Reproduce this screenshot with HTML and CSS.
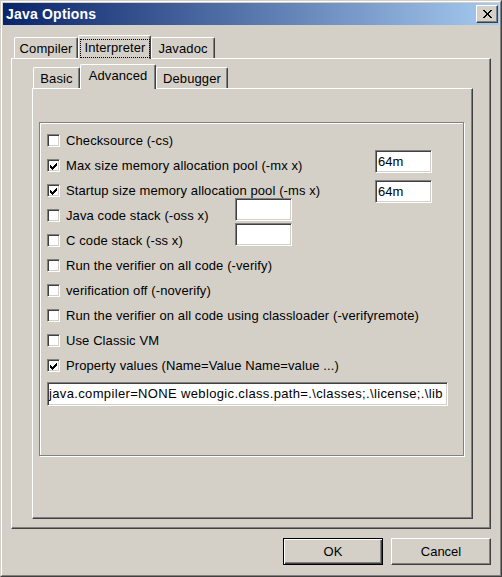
FILE: index.html
```html
<!DOCTYPE html>
<html>
<head>
<meta charset="utf-8">
<title>Java Options</title>
<link rel="stylesheet" href="styles.css">
</head>
<body>
<div class="win">
  <div class="win-in">
    <div class="titlebar">
      <span class="title">Java Options</span>
      <div class="close">
        <svg width="9" height="8" viewBox="0 0 9 8" shape-rendering="crispEdges"><path d="M0 0h2v1h-2zM7 0h2v1h-2zM1 1h2v1h-2zM6 1h2v1h-2zM2 2h2v1h-2zM5 2h2v1h-2zM3 3h3v2h-3zM2 5h2v1h-2zM5 5h2v1h-2zM1 6h2v1h-2zM6 6h2v1h-2zM0 7h2v1h-2zM7 7h2v1h-2z" fill="#000"/></svg>
      </div>
    </div>
    <div class="body">
      <div class="tabs outer-tabs">
        <div class="tab w-compiler">Compiler</div>
        <div class="tab sel w-interp"><span class="focus">Interpreter</span></div>
        <div class="tab w-javadoc">Javadoc</div>
      </div>
      <div class="panel outer-panel">
        <div class="tabs inner-tabs">
          <div class="tab w-basic">Basic</div>
          <div class="tab sel w-adv"><span class="seltext">Advanced</span></div>
          <div class="tab w-debug">Debugger</div>
        </div>
        <div class="panel inner-panel">
          <div class="group">
            <div class="row"><span class="cb"></span><span>Checksource (-cs)</span></div>
            <div class="row">
              <span class="lbl wide"><span class="cb"><svg width="11" height="11" viewBox="1 1 11 11" shape-rendering="crispEdges"><path d="M3 6h1v1h1v1h1v-1h1v-1h1v-1h1v-1h1v3h-1v1h-1v1h-1v1h-1v1h-1v-1h-1v-1h-1z" fill="#000"/></svg></span><span>Max size memory allocation pool (-mx x)</span></span>
              <span class="field small-field f-mx">64m</span>
            </div>
            <div class="row">
              <span class="lbl wide"><span class="cb"><svg width="11" height="11" viewBox="1 1 11 11" shape-rendering="crispEdges"><path d="M3 6h1v1h1v1h1v-1h1v-1h1v-1h1v-1h1v3h-1v1h-1v1h-1v1h-1v1h-1v-1h-1v-1h-1z" fill="#000"/></svg></span><span>Startup size memory allocation pool (-ms x)</span></span>
              <span class="field small-field f-ms">64m</span>
            </div>
            <div class="row">
              <span class="lbl narrow"><span class="cb"></span><span>Java code stack (-oss x)</span></span>
              <span class="field small-field f-oss"></span>
            </div>
            <div class="row">
              <span class="lbl narrow"><span class="cb"></span><span>C code stack (-ss x)</span></span>
              <span class="field small-field f-ss"></span>
            </div>
            <div class="row"><span class="cb"></span><span>Run the verifier on all code (-verify)</span></div>
            <div class="row"><span class="cb"></span><span>verification off (-noverify)</span></div>
            <div class="row"><span class="cb"></span><span>Run the verifier on all code using classloader (-verifyremote)</span></div>
            <div class="row"><span class="cb"></span><span>Use Classic VM</span></div>
            <div class="row"><span class="cb"><svg width="11" height="11" viewBox="1 1 11 11" shape-rendering="crispEdges"><path d="M3 6h1v1h1v1h1v-1h1v-1h1v-1h1v-1h1v3h-1v1h-1v1h-1v1h-1v1h-1v-1h-1v-1h-1z" fill="#000"/></svg></span><span>Property values (Name=Value Name=value ...)</span></div>
            <div class="field prop-field">java.compiler=NONE weblogic.class.path=.\classes;.\license;.\lib</div>
          </div>
        </div>
      </div>
      <div class="buttons">
        <div class="btn default"><span>OK</span></div>
        <div class="btn"><span>Cancel</span></div>
      </div>
    </div>
  </div>
</div>
</body>
</html>
```
FILE: styles.css
```css
html, body {
  margin: 0;
  padding: 0;
}
body {
  background: #D4D0C8;
  font-family: "Liberation Sans", Arial, sans-serif;
  font-size: 13px;
  color: #000;
}
.win {
  width: 502px;
  height: 577px;
  box-sizing: border-box;
  border: 1px solid;
  border-color: #D4D0C8 #404040 #404040 #D4D0C8;
  background: #D4D0C8;
}
.win-in {
  height: 100%;
  box-sizing: border-box;
  border: 1px solid;
  border-color: #fff #808080 #808080 #fff;
  padding: 1px;
  display: flex;
  flex-direction: column;
}
.titlebar {
  height: 22px;
  flex: none;
  display: flex;
  align-items: center;
  background: linear-gradient(to right, #0A246A, #A6CAF0);
  padding-left: 3px;
}
.title {
  color: #fff;
  font-weight: bold;
  font-size: 14px;
  flex: 1;
  letter-spacing: 0.2px;
}
.close {
  width: 22px;
  height: 18px;
  box-sizing: border-box;
  margin-right: 1px;
  background: #D4D0C8;
  border: 1px solid;
  border-color: #fff #404040 #404040 #fff;
  box-shadow: inset -1px -1px #808080;
  display: flex;
  align-items: center;
  justify-content: center;
}
.close svg {
  display: block;
  margin-left: 1px;
}
.body {
  flex: 1;
  display: flex;
  flex-direction: column;
  padding: 10px 8px 9px 8px;
}
.tabs {
  display: flex;
  align-items: flex-end;
  flex: none;
  position: relative;
  z-index: 2;
}
.outer-tabs {
  height: 23px;
  padding-left: 3px;
}
.inner-tabs {
  height: 24px;
  padding-left: 1px;
}
.tab {
  box-sizing: border-box;
  height: 21px;
  border-top: 1px solid #fff;
  border-left: 1px solid #fff;
  border-right: 1px solid #404040;
  box-shadow: inset -1px 0 #808080;
  border-radius: 2px 2px 0 0;
  background: #D4D0C8;
  display: flex;
  align-items: center;
  justify-content: center;
  white-space: nowrap;
  letter-spacing: 0.1px;
}
.tab.sel {
  margin-bottom: -1px;
  align-items: flex-start;
}
.outer-tabs .tab.sel {
  height: 24px;
}
.inner-tabs .tab.sel {
  height: 25px;
}
.w-compiler { width: 64px; }
.w-interp { width: 73px; }
.w-javadoc { width: 64px; }
.w-basic { width: 47px; }
.w-adv { width: 76px; }
.w-debug { width: 72px; }
.focus {
  display: block;
  box-sizing: border-box;
  width: 70px;
  height: 19px;
  margin-top: 3px;
  margin-left: 1px;
  border: 1px dotted #000;
  text-align: center;
  line-height: 16px;
}
.seltext {
  display: block;
  margin-top: 3px;
  line-height: 16px;
}
.panel {
  box-sizing: border-box;
  border-top: 1px solid #fff;
  border-left: 1px solid #fff;
  border-right: 1px solid #404040;
  border-bottom: 1px solid #404040;
  box-shadow: inset -1px -1px #808080;
  background: #D4D0C8;
  position: relative;
  z-index: 1;
}
.outer-panel {
  width: 480px;
  height: 471px;
  padding: 5px 0 0 20px;
  display: flex;
  flex-direction: column;
}
.inner-panel {
  width: 441px;
  height: 431px;
  padding: 33px 0 0 6px;
}
.group {
  box-sizing: border-box;
  width: 425px;
  height: 334px;
  border: 1px solid #808080;
  box-shadow: inset 1px 1px #fff, 1px 1px #fff;
  padding: 5px 0 0 7px;
}
.row {
  height: 25px;
  display: flex;
  align-items: center;
  white-space: nowrap;
  letter-spacing: 0.1px;
}
.lbl {
  display: flex;
  align-items: center;
  flex: none;
}
.lbl.wide { width: 328px; }
.lbl.narrow { width: 188px; }
.cb {
  width: 13px;
  height: 13px;
  box-sizing: border-box;
  flex: none;
  border: 1px solid;
  border-color: #808080 #fff #fff #808080;
  box-shadow: inset 1px 1px #404040, inset -1px -1px #D4D0C8;
  background: #fff;
  margin-right: 6px;
}
.cb svg {
  display: block;
}
.field {
  box-sizing: border-box;
  background: #fff;
  border: 1px solid;
  border-color: #808080 #fff #fff #808080;
  box-shadow: inset 1px 1px #404040, inset -1px -1px #D4D0C8;
  white-space: nowrap;
  overflow: hidden;
}
.small-field {
  width: 57px;
  height: 23px;
  padding-left: 2px;
  line-height: 21px;
  align-self: flex-start;
  letter-spacing: 0;
}
.f-mx { margin-top: -3px; }
.f-ms { margin-top: 2px; }
.f-oss { margin-top: -5px; }
.f-ss { margin-top: -5px; }
.prop-field {
  width: 401px;
  height: 24px;
  margin-top: 4px;
  padding-left: 1px;
  line-height: 22px;
  letter-spacing: 0.35px;
}
.buttons {
  display: flex;
  justify-content: flex-end;
  gap: 8px;
  margin-top: 9px;
}
.btn {
  box-sizing: border-box;
  width: 100px;
  height: 27px;
  border: 1px solid;
  border-color: #fff #404040 #404040 #fff;
  box-shadow: inset -1px -1px #808080;
  display: flex;
  align-items: center;
  justify-content: center;
}
.btn.default {
  border: 1px solid #000;
  box-shadow: inset 1px 1px #fff, inset -1px -1px #404040, inset -2px -2px #808080;
}
```
